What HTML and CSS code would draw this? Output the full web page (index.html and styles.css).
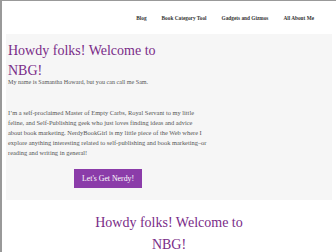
FILE: index.html
```html
<!DOCTYPE html>
<html lang="en">
<head>
    <meta charset="UTF-8">
    <meta name="viewport" content="width=device-width, initial-scale=1.0">
    <title>NerdyBookGirl</title>
    <link rel="stylesheet" href="styles.css">
</head>
<body>

<header class="site-header">
    <nav class="menu">
        <a href="#">Blog</a>
        <a href="#">Book Category Tool</a>
        <a href="#">Gadgets and Gizmos</a>
        <a href="#">All About Me</a>
    </nav>
</header>

<section class="hero">
    <h1>Howdy folks! Welcome to NBG!</h1>
    <p class="intro">My name is Samantha Howard, but you can call me Sam.</p>
    <p class="about">I&#8217;m a self-proclaimed Master of Empty Carbs, Royal Servant to my little feline, and Self-Publishing geek who just loves finding ideas and advice about book marketing. NerdyBookGirl is my little piece of the Web where I explore anything interesting related to self-publishing and book marketing&#8211;or reading and writing in general!</p>
    <div class="cta">
        <a class="button" href="#">Let's Get Nerdy!</a>
    </div>
</section>

<section class="welcome">
    <h2>Howdy folks! Welcome to NBG!</h2>
</section>

</body>
</html>
```

FILE: styles.css
```css
body {
    font-family: 'Liberation Serif', 'Times New Roman', serif;
    margin: 0;
    padding: 0;
    height: 251px;
    overflow: hidden;
    background: #fff;
    color: #555;
    border-top: 1px solid #999;
    border-left: 2px solid #999;
}
.site-header {
    height: 33px;
    display: flex;
    justify-content: flex-end;
    align-items: center;
    padding-right: 22px;
}
.menu {
    display: flex;
    gap: 15px;
    margin-top: 1px;
}
.menu a {
    font-size: 5.3px;
    font-weight: bold;
    color: #333;
    text-decoration: none;
}
.hero {
    background: #f6f6f6;
    margin: 0 4px 0 4px;
    padding: 7px 2px 12px 2px;
}
.hero h1 {
    font-size: 14px;
    font-weight: normal;
    line-height: 20px;
    color: #7a2c88;
    margin: 0 0 -4px 0;
    max-width: 170px;
}
.intro, .about {
    font-size: 6.1px;
    line-height: 10px;
    margin: 0;
}
.about {
    font-size: 6.4px;
    margin-top: 21px;
    max-width: 200px;
}
.cta {
    padding-left: 66px;
    margin-top: 9px;
}
.button {
    display: inline-block;
    background: #8b3ca9;
    color: #fff;
    font-size: 7.8px;
    line-height: 19px;
    padding: 0 8px;
    text-decoration: none;
}
.welcome {
    text-align: center;
    padding-top: 12px;
}
.welcome h2 {
    font-size: 14px;
    font-weight: normal;
    line-height: 22px;
    color: #7a2c88;
    margin: 0 auto;
    max-width: 170px;
}
```
